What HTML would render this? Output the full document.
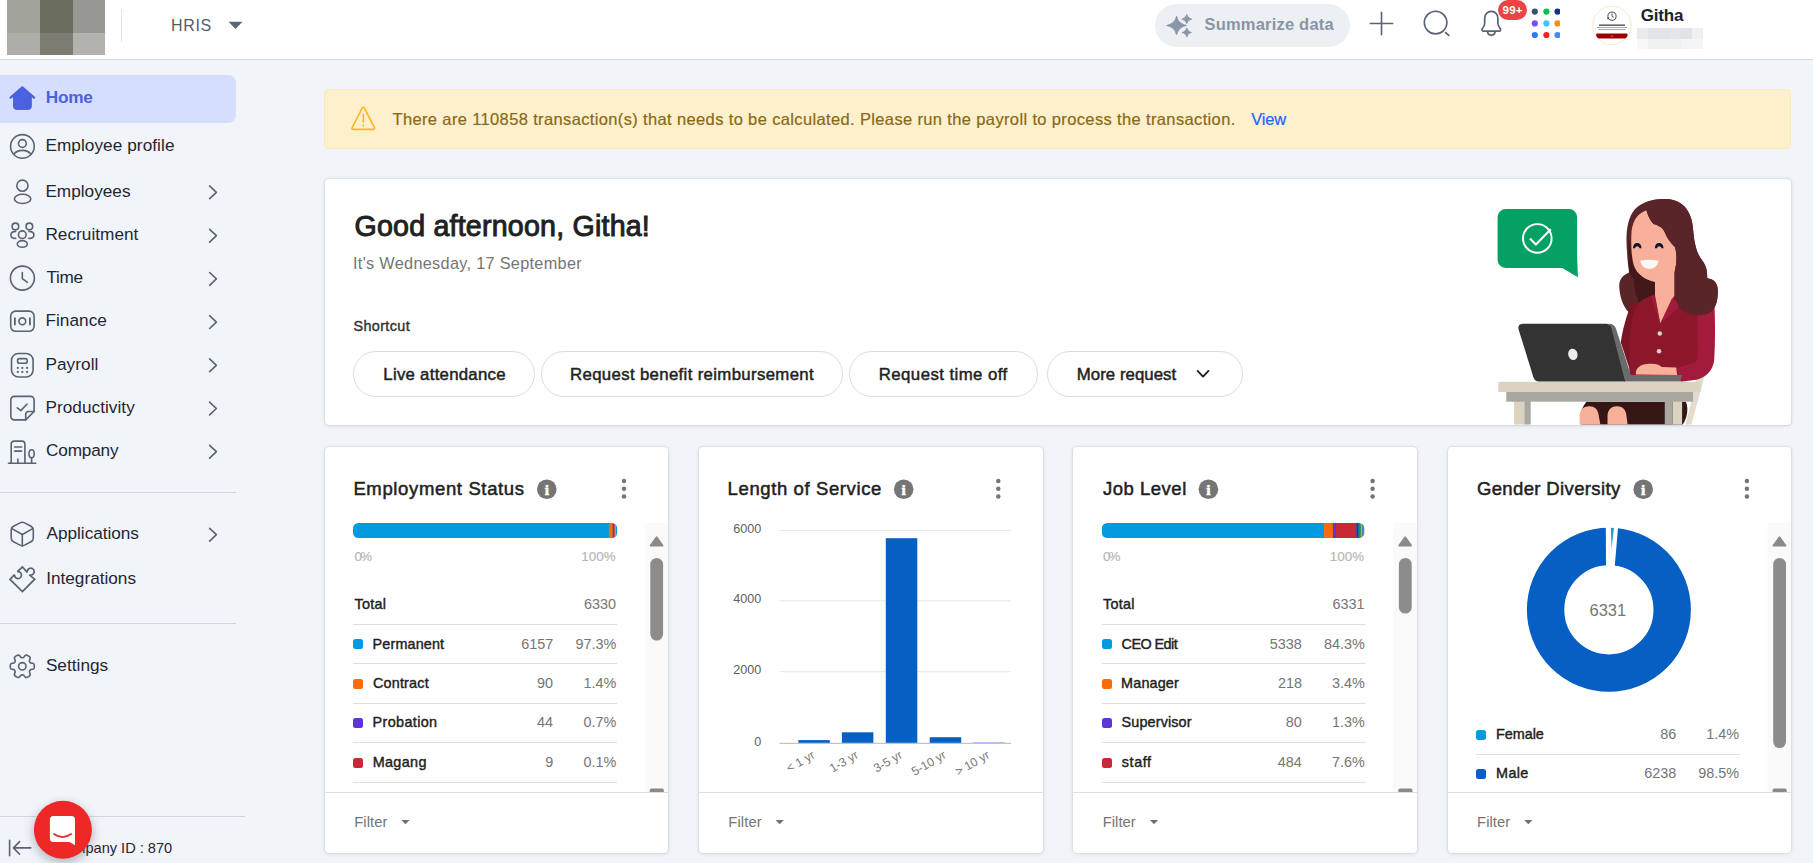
<!DOCTYPE html>
<html lang="en">
<head>
<meta charset="utf-8">
<title>HRIS - Home</title>
<style>
html,body{margin:0;padding:0}
body{width:1813px;height:863px;overflow:hidden;background:#f1f4f8;position:relative;font-family:"Liberation Sans",sans-serif}
.t{position:absolute;white-space:nowrap;line-height:1}
.b{position:absolute;box-sizing:border-box}
svg.ov{position:absolute;left:0;top:0;width:1813px;height:863px;overflow:visible}
header.top{position:absolute;left:0;top:0;width:1813px;height:59px;background:#fff;border-bottom:1px solid #d2d7e1;z-index:3}
aside.side{position:absolute;left:0;top:0;width:245px;height:863px;z-index:4}
main.main{position:absolute;left:0;top:0;width:1813px;height:863px;z-index:1}
.pill{left:1155px;top:4px;width:195px;height:42.5px;border-radius:22px;background:#edf0f3}
.badge{left:1498px;top:0;width:29px;height:20px;border-radius:10px;background:#ec4444}
.navsel{left:0;top:75px;width:236px;height:48px;border-radius:0 8px 8px 0;background:#d6defd}
.hr{height:1px;background:#d0d5dc;left:0}
.alert{left:324.2px;top:89.2px;width:1467.2px;height:59.5px;border-radius:5px;background:#fef0cd;border:1px solid #fde8b9}
.card{background:#fff;border-radius:4px;box-shadow:0 0 2px rgba(0,0,0,.2),0 1px 5px rgba(0,0,0,.09)}
.btn{top:351px;height:45.5px;border:1px solid #dcdcdc;border-radius:23px;background:#fff}
.foot{height:1px;background:#e0e0e0}
.sq{width:10px;height:10px;border-radius:2.5px}
.ln{height:1px;background:#e0e0e0}
.track{background:#fafafa}
.thumb{background:#8c8c8c;border-radius:6.5px;width:12.8px}
</style>
</head>
<body>
<header class="top">
<div class="b pill"></div>
<div class="b badge"></div>
<svg class="ov" viewBox="0 0 1813 863">
  <!-- blurred logo mosaic -->
  <g shape-rendering="crispEdges">
    <rect x="7" y="0" width="33" height="33" fill="#a3a49b"/>
    <rect x="40" y="0" width="33" height="33" fill="#6b6d5f"/>
    <rect x="73" y="0" width="32" height="33" fill="#989992"/>
    <rect x="7" y="33" width="33" height="22" fill="#adaea8"/>
    <rect x="40" y="33" width="33" height="22" fill="#7c7c72"/>
    <rect x="73" y="33" width="32" height="22" fill="#b2b3ad"/>
  </g>
  <rect x="121" y="9" width="1" height="33" fill="#e1e4e9"/>
  <path d="M228.5 21.8h14l-7 7.2z" fill="#5b6577"/>
  <!-- sparkle -->
  <g fill="#8b96a8" stroke="#8b96a8" stroke-width="1.1" stroke-linejoin="round">
    <path d="M1176.6 16.6c1.1 5.2 3.6 7.7 9.6 8.9c-6 1.2-8.5 3.700-9.600 8.900c-1.100-5.200-3.600-7.700-9.600-8.900c6-1.200 8.500-3.700 9.600-8.900z"/>
    <path d="M1186.800 14.700c.6 2.600 1.800 3.800 4.600 4.400c-2.800.6-4 1.800-4.600 4.400c-.6-2.600-1.800-3.800-4.600-4.400c2.800-.6 4-1.800 4.600-4.400z"/>
    <path d="M1186.800 28.200c.6 2.600 1.800 3.800 4.400 4.300c-2.600.5-3.800 1.700-4.400 4.300c-.6-2.600-1.800-3.800-4.400-4.300c2.600-.5 3.800-1.700 4.400-4.300z"/>
  </g>
  <g fill="none" stroke="#5a6373" stroke-width="1.6" stroke-linecap="round" stroke-linejoin="round">
    <!-- plus -->
    <path d="M1370.300 23.500h22.400M1381.500 12.400v22.300"/>
    <!-- search -->
    <circle cx="1435.600" cy="22.600" r="11.300"/>
    <path d="M1445.600 32.600l3.200 2.800" stroke-width="1.800"/>
    <!-- bell -->
    <path stroke-width="1.700" d="M1491.300 11.400c-3.900 0-6.600 3-6.600 6.900v5.200c0 2-1.100 3.500-2.300 5.100c-.9 1.200-.2 2.600 1.300 2.600h15.200c1.500 0 2.200-1.400 1.300-2.600c-1.200-1.600-2.300-3.100-2.300-5.100v-5.200c0-3.900-2.700-6.900-6.600-6.900z"/>
    <path stroke-width="1.700" d="M1487.600 32.600c.5 1.700 1.900 2.700 3.700 2.700s3.200-1 3.700-2.700"/>
  </g>
  <!-- app grid dots -->
  <g>
    <circle cx="1534.800" cy="11.600" r="3.100" fill="#35536f"/>
    <circle cx="1546.400" cy="11.600" r="3.100" fill="#0ac04c"/>
    <circle cx="1534.800" cy="23.400" r="3.100" fill="#7c4dff"/>
    <circle cx="1546.400" cy="23.400" r="3.100" fill="#40c4ff"/>
    <circle cx="1534.800" cy="35" r="3.100" fill="#2979ff"/>
    <circle cx="1546.400" cy="35" r="3.100" fill="#f02525"/>
    <clipPath id="dc"><rect x="1550" y="0" width="10" height="50"/></clipPath>
    <g clip-path="url(#dc)">
      <circle cx="1557.500" cy="11.600" r="3.100" fill="#17308a"/>
      <circle cx="1557.500" cy="23.400" r="3.100" fill="#ff8f00"/>
      <circle cx="1557.500" cy="35" r="3.100" fill="#448aff"/>
    </g>
  </g>
  <!-- avatar -->
  <g>
    <clipPath id="av"><circle cx="1611.900" cy="25.400" r="19"/></clipPath>
    <circle cx="1611.900" cy="25.400" r="19.200" fill="#fff" stroke="#fcdfb8" stroke-width="0.800"/>
    <g clip-path="url(#av)">
      <circle cx="1612" cy="16.200" r="4.100" fill="none" stroke="#333" stroke-width="0.900"/>
      <path d="M1612 13.600v2.800l1.800 1" fill="none" stroke="#222" stroke-width="0.800"/>
      <path d="M1607.300 18.400l1.500-.3" stroke="#222" stroke-width="1.100"/>
      <rect x="1599" y="24.500" width="26" height="1.300" fill="#444"/>
      <rect x="1597" y="27" width="30" height="0.800" fill="#999"/>
      <rect x="1598.500" y="29" width="27" height="0.800" fill="#999"/>
      <rect x="1596.200" y="33.600" width="31.300" height="4.800" rx="1" fill="#9b0000"/>
      <rect x="1610.800" y="35.800" width="2.400" height="0.600" fill="#e9b0b0"/>
    </g>
  </g>
  <!-- blurred subtitle mosaic -->
  <g shape-rendering="crispEdges">
    <rect x="1637" y="28" width="11" height="11" fill="#e9eaed"/>
    <rect x="1648" y="28" width="22" height="11" fill="#e2e4e8"/>
    <rect x="1670" y="28" width="11" height="11" fill="#e4e6e9"/>
    <rect x="1681" y="28" width="11" height="11" fill="#e1e3e7"/>
    <rect x="1692" y="28" width="11" height="11" fill="#eef0f2"/>
    <rect x="1637" y="39" width="11" height="10" fill="#f7f8f8"/>
    <rect x="1648" y="39" width="33" height="10" fill="#eff0f2"/>
    <rect x="1681" y="39" width="22" height="10" fill="#f4f5f6"/>
  </g>
</svg>

<span class="t" style="left:171.1px;top:18px;font-size:16px;color:#545b6b;letter-spacing:0.65px">HRIS</span>
<span class="t" style="left:1204.5px;top:16px;font-size:16.5px;color:#8a94a6;letter-spacing:0.20px;font-weight:700">Summarize data</span>
<span class="t" style="left:1502.6px;top:5px;font-size:11.5px;color:#ffffff;letter-spacing:0.15px;font-weight:700">99+</span>
<span class="t" style="left:1640.8px;top:7px;font-size:17px;color:#1a2230;letter-spacing:-0.22px;font-weight:700">Githa</span>
</header>
<aside class="side">
<div class="b navsel"></div>
<div class="b hr" style="top:492px;width:236px"></div>
<div class="b hr" style="top:623px;width:236px"></div>
<div class="b hr" style="top:816px;width:245px"></div>
<svg class="ov" viewBox="0 0 1813 863">
<g fill="#4b61dd" stroke="#4b61dd" stroke-linejoin="round" stroke-linecap="round"><path stroke-width="1" d="M22.3 87.6L31.3 95.6V106.4Q31.3 109.4 28.3 109.4H16.5Q13.5 109.4 13.5 106.4V95.6Z"/><path fill="none" stroke-width="2.2" d="M10.6 97.7L22.3 87.4L34.1 97.7"/></g>
<g fill="none" stroke="#5a6373" stroke-width="1.6" stroke-linecap="round" stroke-linejoin="round">
<circle cx="22.4" cy="146.4" r="11.8"/><circle cx="22.4" cy="143.5" r="3.9"/><path d="M13.800 154.200C15.800 151.700 18.800 150.400 22.400 150.400C26 150.400 29 151.700 31 154.200"/>
<circle cx="22.400" cy="185.700" r="5.600"/><ellipse cx="22.600" cy="198.900" rx="8.200" ry="4.600"/>
<g stroke-width="1.6"><circle cx="15.4" cy="226.4" r="3.3"/><circle cx="29.35" cy="226.4" r="3.3"/><circle cx="22.3" cy="234.700" r="3.85"/><ellipse cx="22.3" cy="243.950" rx="5" ry="3.3"/><path d="M15.700 231.400C12.300 231.500 10.900 233.100 10.900 234.900C10.900 236.900 12.700 238.300 15.700 238.400"/><path d="M28.900 231.400C32.300 231.500 33.900 233.100 33.900 234.900C33.900 236.900 32 238.300 28.900 238.400"/></g>
<circle cx="22.4" cy="278.1" r="12"/><path d="M22.3 272.5V278.700L27.400 282.4"/>
<rect x="10.700" y="311.100" width="23.400" height="20.200" rx="5"/><path stroke-width="1.800" d="M14.9 318.200V324.600M29.900 318.200V324.600"/><circle cx="22.3" cy="321.3" r="3.4"/>
<rect x="11.5" y="353.5" width="21.600" height="23.5" rx="7"/><rect x="17.600" y="358.6" width="9.600" height="4.600" rx="1.8"/>
</g>
<g fill="#5a6373"><circle cx="17.8" cy="367.9" r="1.1"/><circle cx="22.3" cy="367.9" r="1.1"/><circle cx="27.1" cy="367.9" r="1.1"/><circle cx="17.8" cy="371.9" r="1.1"/><circle cx="22.3" cy="371.9" r="1.1"/><circle cx="27.1" cy="371.9" r="1.1"/></g>
<g fill="none" stroke="#5a6373" stroke-width="1.6" stroke-linecap="round" stroke-linejoin="round">
<path d="M14.3 396.4H30.6a3.5 3.5 0 0 1 3.5 3.5V411.5L25.7 419.900H14.3a3.5 3.5 0 0 1 -3.5 -3.5V399.900a3.5 3.5 0 0 1 3.5 -3.5Z"/><path d="M34.1 411.5H28.700a3 3 0 0 0 -3 3V419.900"/><path d="M17.3 407.8L20.8 410.600L27.100 404"/>
<path d="M11.2 463V444.100a3 3 0 0 1 3 -3H21.900a3 3 0 0 1 3 3V463"/><path d="M8.5 463.2H35.700"/><path d="M14.600 447H21.600M14.600 451.100H21.600M17.900 459V463M31.600 457.700V463"/><ellipse cx="31.600" cy="453.700" rx="2.600" ry="4"/>
<path stroke-width="1.6" d="M20.00 522.90Q22.30 521.70 24.60 522.91L31.00 526.29Q33.30 527.50 33.30 530.10L33.30 537.90Q33.30 540.50 31.00 541.71L24.60 545.09Q22.30 546.30 20.00 545.10L13.50 541.70Q11.20 540.50 11.20 537.90L11.20 530.10Q11.20 527.50 13.50 526.30Z"/>
<path stroke-width="1.6" d="M11.9 528.600L22.3 534.5L32.700 528.600M22.3 534.5V546"/>
<path stroke-width="1.700" stroke-linejoin="miter" stroke-miterlimit="2" d="M10 579.4L14.500 574.700A3.500 3.500 0 1 0 17.300 571.700L22.400 567L27.300 572.300A3.500 3.500 0 1 1 29.300 574.800L34.700 579.200L22.400 591.500Z"/>
<path stroke-width="1.600" d="M34.30 666.30L34.29 666.72L34.26 667.14L34.22 667.55L34.14 667.96L34.01 668.36L33.78 668.74L33.36 669.06L32.68 669.28L31.83 669.40L31.10 669.50L30.61 669.66L30.31 669.86L30.09 670.10L29.91 670.35L29.76 670.61L29.61 670.87L29.48 671.15L29.39 671.45L29.37 671.82L29.48 672.32L29.75 673.01L30.07 673.80L30.22 674.50L30.15 675.02L29.94 675.41L29.66 675.72L29.34 675.99L29.01 676.24L28.66 676.48L28.30 676.69L27.93 676.89L27.56 677.08L27.17 677.25L26.78 677.38L26.37 677.47L25.93 677.46L25.44 677.26L24.91 676.78L24.38 676.10L23.93 675.52L23.55 675.18L23.22 675.02L22.90 674.95L22.60 674.92L22.30 674.91L22.00 674.92L21.70 674.95L21.38 675.02L21.05 675.18L20.67 675.52L20.22 676.10L19.69 676.78L19.16 677.26L18.67 677.46L18.23 677.47L17.82 677.38L17.43 677.25L17.04 677.08L16.67 676.89L16.30 676.69L15.94 676.48L15.59 676.24L15.26 675.99L14.94 675.72L14.66 675.41L14.45 675.02L14.38 674.50L14.53 673.80L14.85 673.01L15.12 672.32L15.23 671.82L15.21 671.45L15.12 671.15L14.99 670.87L14.84 670.61L14.69 670.35L14.51 670.10L14.29 669.86L13.99 669.66L13.50 669.50L12.77 669.40L11.92 669.28L11.24 669.06L10.82 668.74L10.59 668.36L10.46 667.96L10.38 667.55L10.34 667.14L10.31 666.72L10.30 666.30L10.31 665.88L10.34 665.46L10.38 665.05L10.46 664.64L10.59 664.24L10.82 663.86L11.24 663.54L11.92 663.32L12.77 663.20L13.50 663.10L13.99 662.94L14.29 662.74L14.51 662.50L14.69 662.25L14.84 661.99L14.99 661.73L15.12 661.45L15.21 661.15L15.23 660.78L15.12 660.28L14.85 659.59L14.53 658.80L14.38 658.10L14.45 657.58L14.66 657.19L14.94 656.88L15.26 656.61L15.59 656.36L15.94 656.12L16.30 655.91L16.67 655.71L17.04 655.52L17.43 655.35L17.82 655.22L18.23 655.13L18.67 655.14L19.16 655.34L19.69 655.82L20.22 656.50L20.67 657.08L21.05 657.42L21.38 657.58L21.70 657.65L22.00 657.68L22.30 657.69L22.60 657.68L22.90 657.65L23.22 657.58L23.55 657.42L23.93 657.08L24.38 656.50L24.91 655.82L25.44 655.34L25.93 655.14L26.37 655.13L26.78 655.22L27.17 655.35L27.56 655.52L27.93 655.71L28.30 655.91L28.66 656.12L29.01 656.36L29.34 656.61L29.66 656.88L29.94 657.19L30.15 657.58L30.22 658.10L30.07 658.80L29.75 659.59L29.48 660.28L29.37 660.78L29.39 661.15L29.48 661.45L29.61 661.73L29.76 661.99L29.91 662.25L30.09 662.50L30.31 662.74L30.61 662.94L31.10 663.10L31.83 663.20L32.68 663.32L33.36 663.54L33.78 663.86L34.01 664.24L34.14 664.64L34.22 665.05L34.26 665.46L34.29 665.88Z"/><circle cx="22.3" cy="666.3" r="3.700" stroke-width="1.600"/>
<path d="M209.600 185.9L216.400 192.3L209.600 198.7"/>
<path d="M209.600 229.3L216.400 235.7L209.600 242.1"/>
<path d="M209.600 272.5L216.400 278.9L209.600 285.3"/>
<path d="M209.600 315.7L216.400 322.1L209.600 328.5"/>
<path d="M209.600 358.9L216.400 365.3L209.600 371.7"/>
<path d="M209.600 402.1L216.400 408.5L209.600 414.9"/>
<path d="M209.600 445.3L216.400 451.7L209.600 458.1"/>
<path d="M209.600 528.3L216.400 534.7L209.600 541.1"/>
<path d="M9.600 840.200V855.700M13.400 847.900H30.800M19.600 841.600L13.400 847.900L19.600 854.200"/>
</g>
</svg>
<svg class="ov" style="z-index:2" viewBox="0 0 1813 863">
<defs><filter id="cs" x="-50%" y="-50%" width="200%" height="200%"><feGaussianBlur stdDeviation="5"/></filter></defs>
<circle cx="63" cy="833.5" r="30" fill="#4a5a70" opacity="0.36" filter="url(#cs)"/>
<circle cx="62.900" cy="829.800" r="29" fill="#ee2727"/>
<path fill="#fff" d="M53.400 815.900H71.500Q75 815.900 75 819.400V845.300L69.500 842H53.400Q49.900 842 49.900 838.500V819.400Q49.900 815.900 53.400 815.900Z"/>
<path fill="none" stroke="#ee2727" stroke-width="1.800" stroke-linecap="round" d="M54 834.100Q62.500 840.200 71.100 834.100"/>
</svg>

<span class="t" style="left:45.8px;top:89px;font-size:17.2px;color:#4b61dd;letter-spacing:-0.23px;font-weight:700">Home</span>
<span class="t" style="left:45.4px;top:137px;font-size:17.2px;color:#1f2633;letter-spacing:0.07px">Employee profile</span>
<span class="t" style="left:45.4px;top:183px;font-size:17.2px;color:#1f2633;letter-spacing:0.01px">Employees</span>
<span class="t" style="left:45.4px;top:226px;font-size:17.2px;color:#1f2633;letter-spacing:0.03px">Recruitment</span>
<span class="t" style="left:46.5px;top:269px;font-size:17.2px;color:#1f2633;letter-spacing:-0.32px">Time</span>
<span class="t" style="left:45.4px;top:312px;font-size:17.2px;color:#1f2633;letter-spacing:0.05px">Finance</span>
<span class="t" style="left:45.4px;top:356px;font-size:17.2px;color:#1f2633;letter-spacing:0.08px">Payroll</span>
<span class="t" style="left:45.4px;top:399px;font-size:17.2px;color:#1f2633;letter-spacing:0.05px">Productivity</span>
<span class="t" style="left:46.0px;top:442px;font-size:17.2px;color:#1f2633;letter-spacing:-0.17px">Company</span>
<span class="t" style="left:46.6px;top:525px;font-size:17.2px;color:#1f2633;letter-spacing:-0.03px">Applications</span>
<span class="t" style="left:46.2px;top:570px;font-size:17.2px;color:#1f2633">Integrations</span>
<span class="t" style="left:45.9px;top:657px;font-size:17.2px;color:#1f2633;letter-spacing:0.02px">Settings</span>
<span class="t" style="left:54.6px;top:841px;font-size:14.6px;color:#1f2633">Company ID : 870</span>
</aside>
<main class="main">
<div class="b alert"></div>
<section class="b card" style="left:324.7px;top:178.6px;width:1466.6px;height:246.6px"></section>
<div class="b btn" style="left:353.2px;width:182.2px"></div>
<div class="b btn" style="left:541.1px;width:302.4px"></div>
<div class="b btn" style="left:849.1px;width:188.6px"></div>
<div class="b btn" style="left:1047.2px;width:196.2px"></div>
<section class="b card" style="left:324.6px;top:446.7px;width:343.7px;height:406.5px"></section>
<div class="b foot" style="left:324.6px;top:792px;width:343.7px"></div>
<section class="b card" style="left:698.9px;top:446.7px;width:343.7px;height:406.5px"></section>
<div class="b foot" style="left:698.9px;top:792px;width:343.7px"></div>
<section class="b card" style="left:1073.2px;top:446.7px;width:343.7px;height:406.5px"></section>
<div class="b foot" style="left:1073.2px;top:792px;width:343.7px"></div>
<section class="b card" style="left:1447.5px;top:446.7px;width:343.7px;height:406.5px"></section>
<div class="b foot" style="left:1447.5px;top:792px;width:343.7px"></div>
<div class="b sq" style="left:353.2px;top:639.0px;background:#039be0"></div>
<div class="b sq" style="left:353.2px;top:678.6px;background:#f96b07"></div>
<div class="b sq" style="left:353.2px;top:718.0px;background:#5c35d4"></div>
<div class="b sq" style="left:353.2px;top:757.8px;background:#c62a38"></div>
<div class="b ln" style="left:353.2px;top:623.8px;width:264px"></div>
<div class="b ln" style="left:353.2px;top:663.2px;width:264px"></div>
<div class="b ln" style="left:353.2px;top:702.9px;width:264px"></div>
<div class="b ln" style="left:353.2px;top:742.1px;width:264px"></div>
<div class="b ln" style="left:353.2px;top:782.0px;width:264px"></div>
<div class="b sq" style="left:1101.8px;top:639.0px;background:#039be0"></div>
<div class="b sq" style="left:1101.8px;top:678.6px;background:#f96b07"></div>
<div class="b sq" style="left:1101.8px;top:718.0px;background:#5c35d4"></div>
<div class="b sq" style="left:1101.8px;top:757.8px;background:#c62a38"></div>
<div class="b ln" style="left:1101.8px;top:623.8px;width:264px"></div>
<div class="b ln" style="left:1101.8px;top:663.2px;width:264px"></div>
<div class="b ln" style="left:1101.8px;top:702.9px;width:264px"></div>
<div class="b ln" style="left:1101.8px;top:742.1px;width:264px"></div>
<div class="b ln" style="left:1101.8px;top:782.0px;width:264px"></div>
<div class="b sq" style="left:1476.1px;top:729.6px;background:#039be0"></div>
<div class="b sq" style="left:1476.1px;top:769.0px;background:#065fc3"></div>
<div class="b ln" style="left:1476.1px;top:753.6px;width:264px"></div><svg class="ov" viewBox="0 0 1813 863">
<path d="M362.20 108.13Q363.30 106.00 364.40 108.13L374.30 127.27Q375.40 129.40 373.00 129.40L353.60 129.40Q351.20 129.40 352.30 127.27Z" fill="none" stroke="#fbb81c" stroke-width="1.6" stroke-linejoin="round"/>
<path d="M363.3 114.3V122" stroke="#fbb81c" stroke-width="1.6" stroke-linecap="round"/><circle cx="363.3" cy="125.5" r="1" fill="#fbb81c"/>
<path d="M1197.6 370.9L1203 376.6L1208.5 370.9" fill="none" stroke="#222" stroke-width="1.9" stroke-linecap="round" stroke-linejoin="round"/>
<circle cx="546.8" cy="489.3" r="9.8" fill="#757575"/>
<text x="546.8" y="494.6" text-anchor="middle" font-family="Liberation Serif, serif" font-weight="700" font-size="15.5" fill="#fff" stroke="#fff" stroke-width="0.55">i</text>
<circle cx="624.0" cy="481.1" r="2.25" fill="#757575"/>
<circle cx="624.0" cy="488.8" r="2.25" fill="#757575"/>
<circle cx="624.0" cy="496.4" r="2.25" fill="#757575"/>
<path d="M401.3 820.1h8.2l-4.100 4.200z" fill="#707070"/>
<circle cx="903.7" cy="489.3" r="9.8" fill="#757575"/>
<text x="903.7" y="494.6" text-anchor="middle" font-family="Liberation Serif, serif" font-weight="700" font-size="15.5" fill="#fff" stroke="#fff" stroke-width="0.55">i</text>
<circle cx="998.3" cy="481.1" r="2.25" fill="#757575"/>
<circle cx="998.3" cy="488.8" r="2.25" fill="#757575"/>
<circle cx="998.3" cy="496.4" r="2.25" fill="#757575"/>
<path d="M775.6 820.1h8.2l-4.100 4.200z" fill="#707070"/>
<circle cx="1208.4" cy="489.3" r="9.8" fill="#757575"/>
<text x="1208.4" y="494.6" text-anchor="middle" font-family="Liberation Serif, serif" font-weight="700" font-size="15.5" fill="#fff" stroke="#fff" stroke-width="0.55">i</text>
<circle cx="1372.6" cy="481.1" r="2.25" fill="#757575"/>
<circle cx="1372.6" cy="488.8" r="2.25" fill="#757575"/>
<circle cx="1372.6" cy="496.4" r="2.25" fill="#757575"/>
<path d="M1149.9 820.1h8.2l-4.100 4.200z" fill="#707070"/>
<circle cx="1643.2" cy="489.3" r="9.8" fill="#757575"/>
<text x="1643.2" y="494.6" text-anchor="middle" font-family="Liberation Serif, serif" font-weight="700" font-size="15.5" fill="#fff" stroke="#fff" stroke-width="0.55">i</text>
<circle cx="1746.9" cy="481.1" r="2.25" fill="#757575"/>
<circle cx="1746.9" cy="488.8" r="2.25" fill="#757575"/>
<circle cx="1746.9" cy="496.4" r="2.25" fill="#757575"/>
<path d="M1524.2 820.1h8.2l-4.100 4.200z" fill="#707070"/>
<clipPath id="sb1"><rect x="353" y="523" width="264.2" height="15" rx="5.500"/></clipPath>
<g clip-path="url(#sb1)">
<rect x="353.0" y="523" width="256.2" height="15" fill="#039be0"/>
<rect x="608.9" y="523" width="4.1" height="15" fill="#f96b07"/>
<rect x="612.7" y="523" width="1.9" height="15" fill="#5c35d4"/>
<rect x="614.3" y="523" width="0.9" height="15" fill="#c62a38"/>
<rect x="614.9" y="523" width="1.0" height="15" fill="#f2c200"/>
<rect x="615.6" y="523" width="1.9" height="15" fill="#039be0"/>
</g>
<rect x="644.6" y="523" width="23.3" height="269" fill="#fafafa"/>
<path d="M655.68 536.91Q656.60 535.60 657.52 536.91L663.28 545.09Q664.20 546.40 662.60 546.40L650.60 546.40Q649.00 546.40 649.92 545.09Z" fill="#8a8a8a"/>
<rect x="650.3" y="557.9" width="12.8" height="82.6" rx="6.4" fill="#8c8c8c"/>
<path d="M649.7 792V790Q649.7 788.4 651.3 788.4H662.2Q663.8 788.4 663.8 790V792Z" fill="#8a8a8a"/>
<clipPath id="sb3"><rect x="1101.8" y="523" width="262.6" height="15" rx="5.500"/></clipPath>
<g clip-path="url(#sb3)">
<rect x="1101.8" y="523" width="222.6" height="15" fill="#039be0"/>
<rect x="1324.1" y="523" width="9.1" height="15" fill="#f96b07"/>
<rect x="1332.9" y="523" width="3.3" height="15" fill="#5c35d4"/>
<rect x="1335.9" y="523" width="20.6" height="15" fill="#c62a38"/>
<rect x="1356.2" y="523" width="2.7" height="15" fill="#1a3a9a"/>
<rect x="1358.6" y="523" width="2.5" height="15" fill="#0a9a5a"/>
<rect x="1360.8" y="523" width="1.5" height="15" fill="#f29a2a"/>
<rect x="1362.0" y="523" width="2.7" height="15" fill="#5a7fc0"/>
</g>
<rect x="1393.2" y="523" width="23.3" height="269" fill="#fafafa"/>
<path d="M1404.28 536.91Q1405.20 535.60 1406.12 536.91L1411.88 545.09Q1412.80 546.40 1411.20 546.40L1399.20 546.40Q1397.60 546.40 1398.52 545.09Z" fill="#8a8a8a"/>
<rect x="1398.9" y="557.9" width="12.8" height="55.7" rx="6.4" fill="#8c8c8c"/>
<path d="M1398.3 792V790Q1398.3 788.4 1399.9 788.4H1410.8Q1412.4 788.4 1412.4 790V792Z" fill="#8a8a8a"/>
<rect x="1767.5" y="523" width="23.3" height="269" fill="#fafafa"/>
<path d="M1778.58 536.91Q1779.50 535.60 1780.42 536.91L1786.18 545.09Q1787.10 546.40 1785.50 546.40L1773.50 546.40Q1771.90 546.40 1772.82 545.09Z" fill="#8a8a8a"/>
<rect x="1773.2" y="557.9" width="12.8" height="190.1" rx="6.4" fill="#8c8c8c"/>
<path d="M1772.6 792V790Q1772.6 788.4 1774.2 788.4H1785.1Q1786.7 788.4 1786.7 790V792Z" fill="#8a8a8a"/>
<rect x="779.4" y="530.1" width="231.6" height="1" fill="#e6e6e6"/>
<rect x="779.4" y="600.3" width="231.6" height="1" fill="#e6e6e6"/>
<rect x="779.4" y="671.2" width="231.6" height="1" fill="#e6e6e6"/>
<rect x="779.4" y="742.8" width="231.6" height="1.1" fill="#bdbdbd"/>
<rect x="798.3" y="740.1" width="31.5" height="2.7" fill="#065fc3"/>
<rect x="841.9" y="732.3" width="31.5" height="10.5" fill="#065fc3"/>
<rect x="885.8" y="538.2" width="31.5" height="204.6" fill="#065fc3"/>
<rect x="929.7" y="737.2" width="31.5" height="5.6" fill="#065fc3"/>
<rect x="973.1" y="742" width="31.7" height="0.900" fill="#9cc0ea"/>
<text transform="translate(815.7 757.3) rotate(-30)" text-anchor="end" font-family="Liberation Sans, sans-serif" font-size="12.1" fill="#777">&lt; 1 yr</text>
<text transform="translate(859.3 757.3) rotate(-30)" text-anchor="end" font-family="Liberation Sans, sans-serif" font-size="12.1" fill="#777">1-3 yr</text>
<text transform="translate(903.2 757.3) rotate(-30)" text-anchor="end" font-family="Liberation Sans, sans-serif" font-size="12.1" fill="#777">3-5 yr</text>
<text transform="translate(947.1 757.3) rotate(-30)" text-anchor="end" font-family="Liberation Sans, sans-serif" font-size="12.1" fill="#777">5-10 yr</text>
<text transform="translate(990.5 757.3) rotate(-30)" text-anchor="end" font-family="Liberation Sans, sans-serif" font-size="12.1" fill="#777">&gt; 10 yr</text>
<circle cx="1608.9" cy="609.8" r="63.3" fill="none" stroke="#065fc3" stroke-width="37.4"/>
<path d="M1605.8 526L1618.2 526L1614.7 566.5L1606 566.5Z" fill="#fff"/>
<defs><linearGradient id="slv" x1="0" y1="0" x2="0" y2="1"><stop offset="0" stop-color="#0a9adf"/><stop offset="0.55" stop-color="#3fb0e8"/><stop offset="1" stop-color="#d8effa"/></linearGradient></defs>
<path d="M1610.9 527.8L1613.9 527.9L1611.3 553Z" fill="url(#slv)"/><!-- speech bubble -->
<path d="M1505.600 209.100H1569.100A8 8 0 0 1 1577.100 217.100V256L1577.900 277.300L1562.300 267.900H1505.600A8 8 0 0 1 1497.600 259.900V217.100A8 8 0 0 1 1505.600 209.100Z" fill="#04a064"/>
<circle cx="1537.300" cy="238.400" r="14.300" fill="none" stroke="#fff" stroke-width="1.900"/>
<path d="M1529.900 238.600L1535.900 244.600L1550.800 229.200" fill="none" stroke="#fff" stroke-width="2.100"/>
<clipPath id="ilc"><rect x="1480" y="180" width="300" height="244.500"/></clipPath>
<g clip-path="url(#ilc)">
<g transform="translate(1490 300) scale(0.15066)">
  <!-- chair -->
  <path d="M1385 470L1425 500C1400 600 1360 740 1335 835H1295C1320 740 1350 620 1365 540Z" fill="#e3dccb"/>
  <path d="M1350 395L1392 380L1400 420L1360 440Z" fill="#e3dccb"/>
  <!-- skirt -->
  <path d="M640 675H1300C1320 720 1310 790 1270 840H610C590 790 600 720 640 675Z" fill="#361614"/>
  <!-- knees -->
  <path d="M595 840V770C595 725 625 705 658 705C692 705 720 725 722 770L735 840Z" fill="#f9b09a"/>
  <path d="M780 840V770C780 725 810 705 843 705C877 705 903 725 906 770L915 840Z" fill="#f9b09a"/>
  <!-- table -->
  <rect x="160" y="670" width="68" height="170" fill="#dbd2bf"/>
  <rect x="228" y="670" width="42" height="170" fill="#a8a8a0"/>
  <rect x="1160" y="670" width="52" height="170" fill="#a8a8a0"/>
  <rect x="1212" y="670" width="63" height="170" fill="#dbd2bf"/>
  <rect x="108" y="608" width="1240" height="67" fill="#a8a8a0"/>
  <rect x="55" y="543" width="1343" height="67" fill="#dbd2bf"/>
  <!-- hair back -->
  <g transform="translate(730 -730)">
    <path d="M180 420C170 300 175 200 230 130C290 70 380 55 460 62C560 75 610 150 618 260C625 350 640 420 680 470C710 510 712 550 712 585C760 590 785 620 782 680C780 740 770 790 720 820C650 845 560 830 520 770L495 700L365 700L300 760L190 810C150 770 130 700 128 640C125 590 160 560 195 548C185 500 182 460 180 420Z" fill="#5a2529"/>
    <path d="M190 300L215 480L240 545L365 610V740L262 760C235 690 228 640 225 590L192 547Z" fill="#43181a"/>
  </g>
  <!-- left arm (dark) -->
  <path d="M940 20C900 120 880 200 868 280L930 470L1000 470L1000 20Z" fill="#7a1424"/>
  <!-- torso -->
  <path d="M1083 -32C1010 -12 975 20 955 80C935 150 925 220 925 300L925 505L1390 505L1390 -45Z" fill="#8c162a"/>
  <!-- right arm -->
  <path d="M1375 30L1490 30C1495 160 1495 300 1488 400C1480 470 1430 515 1370 530L1265 542L1238 452L1350 420C1375 410 1385 380 1380 340Z" fill="#a31b3c"/>
  <!-- buttons -->
  <circle cx="1127" cy="222" r="15" fill="#d4d4d6"/>
  <circle cx="1122" cy="340" r="15" fill="#d4d4d6"/>
  <!-- hands -->
  <path d="M968 495C965 460 985 430 1040 424C1090 420 1120 425 1140 445L1236 448L1242 497Z" fill="#f9b09a"/>
  <!-- laptop -->
  <path d="M790 158C815 158 830 170 838 195L935 498H1275L1262 541H890Z" fill="#6b6b6b"/>
  <path d="M222 158H770C790 158 800 168 806 188L897 541H325C305 541 295 532 288 512L190 195C183 172 195 158 222 158Z" fill="#333333"/>
  <ellipse cx="550" cy="361" rx="31" ry="38" transform="rotate(-12 550 361)" fill="#e9efed"/>
  <!-- head group -->
  <g transform="translate(730 -730)">
    <path d="M308 135C240 160 210 220 208 300C206 380 210 450 225 500C245 560 300 600 365 610V720L400 886L480 722L495 700V545C512 480 510 420 498 380C470 350 445 320 432 285C420 250 390 235 355 225C330 200 318 170 308 135Z" fill="#f9b09a"/>
    <path d="M1075 720" fill="none"/>
    <!-- collar over neck -->
    <path d="M340 702L366 700L400 884L386 856Z" fill="#a31b3c"/>
    <path d="M478 718L534 768L401 888Z" fill="#a31b3c"/>
    <!-- eyes -->
    <path d="M219 386Q221 352 247 352Q273 352 276 386L263 386Q259 373 247 373Q236 373 232 386Z" fill="#0f1433"/>
    <path d="M364 386Q366 352 393 352Q419 352 422 386L409 386Q405 373 393 373Q382 373 378 386Z" fill="#0f1433"/>
    <!-- smile -->
    <path d="M267 470Q328 456 389 470Q380 520 328 525Q276 520 267 470Z" fill="#f8faf8"/>
    <!-- front hair (right mass) -->
    <path d="M308 135C318 170 330 200 355 225C390 235 420 250 432 285C445 320 470 350 498 380C510 420 512 480 495 545V700L520 770C560 830 650 845 720 820C770 790 780 740 782 680C785 620 760 590 712 585C712 550 710 510 680 470C640 420 625 350 618 260C610 150 560 75 460 62C400 56 340 65 290 90Z" fill="#5a2529"/>
  </g>
  <!-- hair falling over shoulder (right) -->
</g>
</g>
</svg>

<span class="t" style="left:392.5px;top:111px;font-size:16.5px;color:#8a6914;letter-spacing:0.36px;-webkit-text-stroke:0.2px">There are 110858 transaction(s) that needs to be calculated. Please run the payroll to process the transaction.</span>
<span class="t" style="left:1251.3px;top:111px;font-size:16.5px;color:#2962ff;letter-spacing:-0.23px;-webkit-text-stroke:0.2px">View</span>
<span class="t" style="left:354.5px;top:212px;font-size:28.6px;color:#212121;letter-spacing:0.21px;-webkit-text-stroke:0.95px">Good afternoon, Githa!</span>
<span class="t" style="left:353.0px;top:255px;font-size:16.3px;color:#757575;letter-spacing:0.30px">It's Wednesday, 17 September</span>
<span class="t" style="left:353.4px;top:319px;font-size:14.4px;color:#333;letter-spacing:0.39px;-webkit-text-stroke:0.40px">Shortcut</span>
<span class="t" style="left:383.3px;top:367px;font-size:16.8px;color:#222;letter-spacing:0.27px;-webkit-text-stroke:0.47px">Live attendance</span>
<span class="t" style="left:570.0px;top:367px;font-size:16.8px;color:#222;letter-spacing:0.34px;-webkit-text-stroke:0.47px">Request benefit reimbursement</span>
<span class="t" style="left:878.8px;top:367px;font-size:16.8px;color:#222;letter-spacing:0.43px;-webkit-text-stroke:0.47px">Request time off</span>
<span class="t" style="left:1076.8px;top:367px;font-size:16.8px;color:#222;letter-spacing:0.05px;-webkit-text-stroke:0.47px">More request</span>
<span class="t" style="left:353.4px;top:480px;font-size:18.5px;color:#212121;letter-spacing:0.64px;-webkit-text-stroke:0.5px">Employment Status</span>
<span class="t" style="left:354.3px;top:815px;font-size:14.8px;color:#757575;letter-spacing:0.03px">Filter</span>
<span class="t" style="left:727.6px;top:480px;font-size:18.5px;color:#212121;letter-spacing:0.61px;-webkit-text-stroke:0.5px">Length of Service</span>
<span class="t" style="left:728.3px;top:815px;font-size:14.8px;color:#757575;letter-spacing:0.10px">Filter</span>
<span class="t" style="left:1103.0px;top:480px;font-size:18.5px;color:#212121;letter-spacing:0.51px;-webkit-text-stroke:0.5px">Job Level</span>
<span class="t" style="left:1102.7px;top:815px;font-size:14.8px;color:#757575;letter-spacing:0.04px">Filter</span>
<span class="t" style="left:1476.9px;top:480px;font-size:18.5px;color:#212121;letter-spacing:0.37px;-webkit-text-stroke:0.5px">Gender Diversity</span>
<span class="t" style="left:1477.1px;top:815px;font-size:14.8px;color:#757575;letter-spacing:0.05px">Filter</span>
<span class="t" style="left:354.5px;top:550px;font-size:13.4px;color:#b8b8b8;letter-spacing:-1.72px;-webkit-text-stroke:0.2px">0%</span>
<span class="t" style="left:581.2px;top:550px;font-size:13.4px;color:#b8b8b8;letter-spacing:0.10px;-webkit-text-stroke:0.2px">100%</span>
<span class="t" style="left:354.6px;top:597px;font-size:14.4px;color:#212121;letter-spacing:0.27px;-webkit-text-stroke:0.40px">Total</span>
<span class="t" style="left:583.9px;top:597px;font-size:14.4px;color:#757575">6330</span>
<span class="t" style="left:372.6px;top:637px;font-size:14.4px;color:#212121;letter-spacing:0.14px;-webkit-text-stroke:0.40px">Permanent</span>
<span class="t" style="left:521.3px;top:637px;font-size:14.4px;color:#757575">6157</span>
<span class="t" style="left:575.5px;top:637px;font-size:14.4px;color:#757575">97.3%</span>
<span class="t" style="left:372.9px;top:676px;font-size:14.4px;color:#212121;letter-spacing:0.20px;-webkit-text-stroke:0.40px">Contract</span>
<span class="t" style="left:537.1px;top:676px;font-size:14.4px;color:#757575">90</span>
<span class="t" style="left:583.5px;top:676px;font-size:14.4px;color:#757575">1.4%</span>
<span class="t" style="left:372.6px;top:715px;font-size:14.4px;color:#212121;letter-spacing:0.36px;-webkit-text-stroke:0.40px">Probation</span>
<span class="t" style="left:537.1px;top:715px;font-size:14.4px;color:#757575">44</span>
<span class="t" style="left:583.5px;top:715px;font-size:14.4px;color:#757575">0.7%</span>
<span class="t" style="left:372.7px;top:755px;font-size:14.4px;color:#212121;letter-spacing:0.34px;-webkit-text-stroke:0.40px">Magang</span>
<span class="t" style="left:545.2px;top:755px;font-size:14.4px;color:#757575">9</span>
<span class="t" style="left:583.5px;top:755px;font-size:14.4px;color:#757575">0.1%</span>
<span class="t" style="left:1103.1px;top:550px;font-size:13.4px;color:#b8b8b8;letter-spacing:-1.94px;-webkit-text-stroke:0.2px">0%</span>
<span class="t" style="left:1329.8px;top:550px;font-size:13.4px;color:#b8b8b8;letter-spacing:0.04px;-webkit-text-stroke:0.2px">100%</span>
<span class="t" style="left:1103.1px;top:597px;font-size:14.4px;color:#212121;letter-spacing:0.21px;-webkit-text-stroke:0.40px">Total</span>
<span class="t" style="left:1332.4px;top:597px;font-size:14.4px;color:#757575">6331</span>
<span class="t" style="left:1121.6px;top:637px;font-size:14.4px;color:#212121;letter-spacing:-0.56px;-webkit-text-stroke:0.40px">CEO Edit</span>
<span class="t" style="left:1269.8px;top:637px;font-size:14.4px;color:#757575">5338</span>
<span class="t" style="left:1324.0px;top:637px;font-size:14.4px;color:#757575">84.3%</span>
<span class="t" style="left:1121.1px;top:676px;font-size:14.4px;color:#212121;letter-spacing:0.15px;-webkit-text-stroke:0.40px">Manager</span>
<span class="t" style="left:1277.9px;top:676px;font-size:14.4px;color:#757575">218</span>
<span class="t" style="left:1332.0px;top:676px;font-size:14.4px;color:#757575">3.4%</span>
<span class="t" style="left:1121.6px;top:715px;font-size:14.4px;color:#212121;letter-spacing:0.13px;-webkit-text-stroke:0.40px">Supervisor</span>
<span class="t" style="left:1285.8px;top:715px;font-size:14.4px;color:#757575">80</span>
<span class="t" style="left:1332.0px;top:715px;font-size:14.4px;color:#757575">1.3%</span>
<span class="t" style="left:1121.8px;top:755px;font-size:14.4px;color:#212121;letter-spacing:0.59px;-webkit-text-stroke:0.40px">staff</span>
<span class="t" style="left:1277.7px;top:755px;font-size:14.4px;color:#757575">484</span>
<span class="t" style="left:1332.0px;top:755px;font-size:14.4px;color:#757575">7.6%</span>
<span class="t" style="left:1496.1px;top:727px;font-size:14.4px;color:#212121;letter-spacing:-0.05px;-webkit-text-stroke:0.40px">Female</span>
<span class="t" style="left:1660.3px;top:727px;font-size:14.4px;color:#757575">86</span>
<span class="t" style="left:1706.3px;top:727px;font-size:14.4px;color:#757575">1.4%</span>
<span class="t" style="left:1496.1px;top:766px;font-size:14.4px;color:#212121;letter-spacing:0.31px;-webkit-text-stroke:0.40px">Male</span>
<span class="t" style="left:1644.2px;top:766px;font-size:14.4px;color:#757575">6238</span>
<span class="t" style="left:1698.3px;top:766px;font-size:14.4px;color:#757575">98.5%</span>
<span class="t" style="left:1589.5px;top:602px;font-size:16.5px;color:#757575;letter-spacing:-0.04px">6331</span>
<span class="t" style="left:733.2px;top:523px;font-size:12.6px;color:#616161">6000</span>
<span class="t" style="left:733.2px;top:593px;font-size:12.6px;color:#616161">4000</span>
<span class="t" style="left:733.2px;top:664px;font-size:12.6px;color:#616161">2000</span>
<span class="t" style="left:754.2px;top:736px;font-size:12.6px;color:#616161">0</span>
</main>
</body>
</html>
